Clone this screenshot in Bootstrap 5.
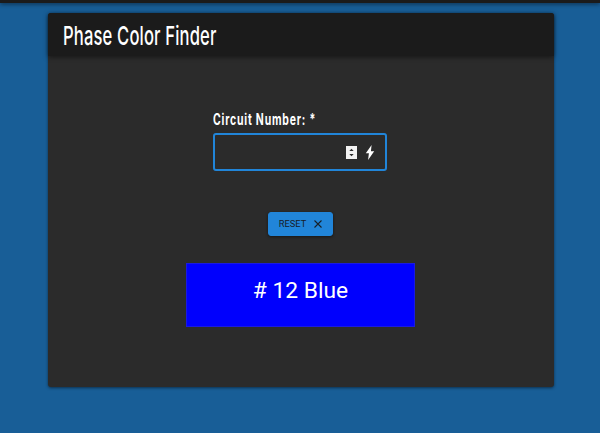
<!DOCTYPE html>
<html lang="en">
<head>
<meta charset="utf-8">
<meta name="viewport" content="width=device-width, initial-scale=1">
<title>Phase Color Finder</title>
<link href="https://cdn.jsdelivr.net/npm/bootstrap@5.3.0/dist/css/bootstrap.min.css" rel="stylesheet">
<style>
body { background: #185e97; font-family: Roboto, sans-serif; height: 433px; overflow: hidden; }
.top-strip { height: 2.5px; background: #1b1b1b; box-shadow: 0 1px 4px rgba(0,0,0,.6); }
.panel { width: 506px; height: 374px; margin-top: 10.5px; margin-left: 48px; background: #2b2b2b; border-radius: 3px; box-shadow: 0 1px 3px rgba(0,0,0,.5); }
.panel-head { height: 43px; background: #1b1b1b; padding-left: 15px; border-radius: 3px 3px 0 0; box-shadow: 0 1px 5px rgba(0,0,0,.5); }
.panel-body { width: 505px; }
.condensed { font-family: Inter, sans-serif; white-space: nowrap; transform-origin: left center; color: #fff; }
.panel-title { display: inline-block; font-size: 26px; line-height: 45px; font-weight: 500; letter-spacing: .25px; transform: scaleX(.638); margin: 0; }
.field { width: 174px; margin-top: 53px; margin-right: .5px; }
.field-label { display: block; font-size: 15.5px; line-height: 22px; height: 20px; font-weight: 700; letter-spacing: 1.2px; transform: scaleX(.675); margin: 0; }
.number-box { height: 38px; margin-top: 4px; border: 2px solid #2185d9; border-radius: 3px; padding-right: 10.5px; }
.reset-btn { --bs-btn-bg: #2185d9; --bs-btn-color: #182028; --bs-btn-border-color: #2185d9; --bs-btn-border-radius: 3px; width: 65px; height: 24px; margin-top: 41px; font-size: 9.3px; padding: 0; box-shadow: 0 1px 3px rgba(0,0,0,.5); }
.result { width: 229px; height: 64px; margin-top: 27px; background: #0000fd; border: 1px solid #1a1ae0; font-size: 22.8px; line-height: 54px; color: #fff; }
</style>
<script src="https://cdn.jsdelivr.net/npm/bootstrap@5.3.0/dist/js/bootstrap.bundle.min.js"></script>
</head>
<body>
<div class="top-strip"></div>
<main class="panel">
  <header class="panel-head"><h1 class="condensed panel-title">Phase Color Finder</h1></header>
  <div class="panel-body d-flex flex-column align-items-center">
    <div class="field">
      <label class="condensed field-label" for="circuit">Circuit Number: *</label>
      <div class="number-box d-flex align-items-center justify-content-end" id="circuit">
        <svg class="me-2" width="11" height="13" viewBox="0 0 11 13"><path fill="#f2f2f2" d="M0 0h11v13H0z"/><path fill="#2b2b2b" d="M5.5 2.8 7.7 5H3.3zM5.5 10.2 7.7 8H3.3z"/></svg>
        <svg width="10" height="15" viewBox="0 0 10 15"><path fill="#fff" d="M6.6 0 .8 8.2h3.1L3.1 15 9.2 6.3H5.9z"/></svg>
      </div>
    </div>
    <button type="button" class="btn reset-btn d-flex align-items-center justify-content-center">
      <span>RESET</span>
      <svg class="ms-2" width="8" height="8" viewBox="0 0 8 8"><path stroke="#182028" stroke-width="1.1" d="m.5.5 7 7m0-7-7 7"/></svg>
    </button>
    <div class="result text-center"># 12 Blue</div>
  </div>
</main>
</body>
</html>
